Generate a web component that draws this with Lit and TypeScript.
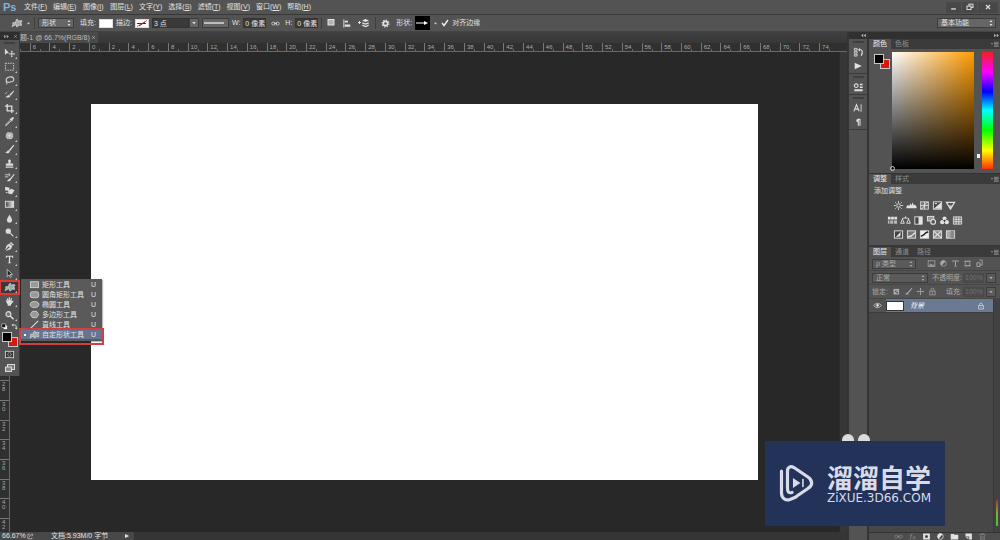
import { LitElement, html, svg, css, TemplateResult } from "lit";
import { customElement, property, state } from "lit/decorators.js";
import { classMap } from "lit/directives/class-map.js";

type Glyph = TemplateResult;

/* 12x12 glyphs; "currentColor" follows the button colour. */
const glyphs: Record<string, Glyph> = {
  move: svg`<path d="M1 1.5v7l2-1.8h2.6z" fill="currentColor"/><path d="M8.5 4.5v6M5.5 7.5h6" stroke="currentColor"/><path d="M7.4 5.3h2.2l-1.1-1.4zM7.4 9.7h2.2l-1.1 1.4zM10.6 6.4v2.2l1.2-1.1z" fill="currentColor"/>`,
  marquee: svg`<rect x="1.5" y="2.5" width="9" height="7.5" fill="none" stroke="currentColor" stroke-dasharray="1.6 1.1"/>`,
  lasso: svg`<ellipse cx="6.5" cy="5" rx="4.2" ry="2.8" fill="none" stroke="currentColor" stroke-width="1.1" transform="rotate(-12 6.5 5)"/><path d="M3 6.6c-1.4 .4-1.2 2 .2 1.7M3.2 8.3c.6 .8 0 1.7-1 2" fill="none" stroke="currentColor"/>`,
  quick: svg`<path d="M10.5 1.5L5.8 6.2l1.4 1.2 3.8-5z" fill="currentColor"/><path d="M5.5 6.6c-1.5 0-2 1.6-4 2 1.6 1.2 4.5 1 5.2-.8z" fill="currentColor"/><path d="M1.5 5.5c.5-1.6 2-2.3 3.3-2.3" fill="none" stroke="currentColor" stroke-dasharray="1 1"/>`,
  crop: svg`<path d="M3.5 1v7.5H11M1 3.5h7.5V11" fill="none" stroke="currentColor" stroke-width="1.4"/>`,
  dropper: svg`<path d="M7.2 3L9 1.3c1-.7 2.2 .5 1.6 1.5L9 4.6l.5 .7-.8 .7-2.7-2.7 .7-.7z" fill="currentColor"/><path d="M6.7 4.7L2.5 9l-.8 1.5L3.2 9.7l4.2-4.2" fill="none" stroke="currentColor"/>`,
  patch: svg`<rect x="2.5" y="3" width="7" height="6.5" rx="2" fill="#b5b5b5" stroke="currentColor" stroke-dasharray="1.5 .8"/><path d="M4 6.2h4M6 4.5v3.5" stroke="currentColor"/>`,
  brush: svg`<path d="M11 1L5.5 6.5l1.2 1.2z" fill="currentColor"/><path d="M10.8 1.2L6 7" stroke="currentColor" stroke-width="1.2"/><path d="M5.2 6.9c-1.6 0-1.6 2-3.9 2.5 1.8 1.3 5 .8 5-1.5z" fill="currentColor"/>`,
  stamp: svg`<path d="M4.5 2.7a1.6 1.6 0 0 1 3 0c.2 1.3-.7 1.8-.5 3.3h3v2.5H2V6h3c.2-1.5-.7-2-.5-3.3zM1.8 9.4h8.4v1.2H1.8z" fill="currentColor"/>`,
  history: svg`<path d="M11 2L6.5 7c-1.5 .2-1.5 1.8-3.5 2.5 2 1.2 4.5 .3 4.7-1.7L11.5 3z" fill="currentColor"/><path d="M1 3h5M1 5.3h3.5M5 1.5L6.8 3 5 4.5" fill="none" stroke="currentColor" stroke-width=".9"/>`,
  eraser: svg`<path d="M1.2 2l4.8 1v3.5L1.2 5.7z" fill="currentColor"/><path d="M4.6 6.6l3.4-2.4 3.5 1.6-2.8 4.2-4.1-.8z" fill="currentColor"/><path d="M2 8l2 .4" stroke="currentColor"/>`,
  gradient: svg`<defs><linearGradient id="gr"><stop stop-color="#444"/><stop offset="1" stop-color="#eee"/></linearGradient></defs><rect x="1.5" y="2.5" width="9" height="6.5" fill="url(#gr)" stroke="currentColor"/>`,
  drop: svg`<path d="M6 1.5c.5 2 2.8 3.7 2.8 6A2.8 2.8 0 0 1 6 10.3a2.8 2.8 0 0 1-2.8-2.8c0-2.3 2.3-4 2.8-6z" fill="currentColor"/>`,
  dodge: svg`<circle cx="4.7" cy="4.5" r="2.9" fill="currentColor"/><path d="M6.8 6.6l3.4 3.6" stroke="currentColor" stroke-width="1.2"/>`,
  pen: svg`<path d="M7.6 1l3.2 3-1.2 1.2-3.2-3zM6 2.8l3 3-1.5 3.2L1.8 11l3-3a1 1 0 1 0-.8-.8l-3 3 2-5.7z" fill="currentColor"/>`,
  type: svg`<path d="M2 2h8v2.3h-.8L8.7 3H6.7v6.2l1.2 .3v.6H4.1v-.6l1.2-.3V3h-2l-.5 1.3H2z" fill="currentColor"/>`,
  pick: svg`<path d="M3.5 1.5v8l2-2 1.3 2.7 1.2-.6-1.3-2.5h2.6z" fill="#222" stroke="currentColor" stroke-width=".8"/>`,
  shape: svg`<path d="M1 9.5c1-1.5 1.3-2.5 .6-3.5 1.2-.7 2.4-.5 3 .3-.2-1.4 .4-2.9 1.5-4.2 .9 .8 1.2 1.7 1.1 2.5 .9-.9 2.3-1.2 3.8-.6-.3 1-.8 1.5-1.5 1.7 .9 .5 1.2 1.4 1 2.6-1 .3-1.7 0-2.3-.6-.3 1-1.2 2-2.5 2.1-.3-.6-.2-1.2 .1-2-1.3 0-2.6 .5-4.8 1.7z" fill="#a5a5a5" stroke="currentColor" stroke-width=".8"/>`,
  hand: svg`<path d="M2 5.5c-.4-.8 .5-1.3 1-.6l.8 1L3 3.2c-.2-.9 .9-1.2 1.2-.3L5 5.2l.1-3.3c0-.9 1.2-.9 1.3 0l.2 3.2 .9-2.4c.3-.8 1.4-.5 1.2 .4l-.6 3 1.2-.8c.8-.4 1.3 .4 .7 1L7.500 9.5v1H4v-1.3z" fill="currentColor"/>`,
  zoom: svg`<circle cx="4.8" cy="4.5" r="2.7" fill="#777" stroke="currentColor" stroke-width="1.2"/><path d="M6.9 6.6l3.5 3.6" stroke="currentColor" stroke-width="1.6"/>`,
  mask: svg`<rect x="1.5" y="2.5" width="9" height="7" fill="#333" stroke="currentColor" stroke-width=".9"/><circle cx="6" cy="6" r="1.9" fill="none" stroke="currentColor" stroke-dasharray="1 .7"/>`,
  screen: svg`<rect x="3.5" y="2.5" width="7" height="5" fill="#777" stroke="currentColor"/><rect x="1.5" y="5" width="6" height="4.5" fill="#888" stroke="currentColor"/>`,
  rect: svg`<rect x="1.5" y="3" width="9" height="6.5" fill="#999" stroke="currentColor" stroke-width=".8"/>`,
  round: svg`<rect x="1.5" y="3" width="9" height="6.5" rx="2" fill="#999" stroke="currentColor" stroke-width=".8"/>`,
  oval: svg`<ellipse cx="6" cy="6" rx="4.7" ry="3.3" fill="#999" stroke="currentColor" stroke-width=".8"/>`,
  poly: svg`<path d="M3.8 2.5h4.4L10.6 6 8.2 9.5H3.8L1.4 6z" fill="#999" stroke="currentColor" stroke-width=".8"/>`,
  line: svg`<path d="M2 10l8-8" stroke="currentColor" stroke-width="1.1"/>`,
  square: svg`<rect x="3" y="2.5" width="6" height="5.5" fill="#b4b4b4" stroke="currentColor"/>`,
  align: svg`<path d="M2 1.5v9" stroke="currentColor"/><path d="M3 3h3.5v2H3zM3 7h6v2.5H3z" fill="currentColor"/>`,
  stack: svg`<path d="M0 5.5h3M1.5 4v3" stroke="currentColor"/><path d="M4 3.5L7.5 2 11 3.5 7.5 5z" fill="currentColor"/><path d="M4.3 5.8l3.2 1.3 3.2-1.3M4.3 8.2l3.2 1.3 3.2-1.3" fill="none" stroke="currentColor" stroke-width="1.3"/>`,
  gear: svg`<circle cx="6" cy="6" r="2.9" fill="none" stroke="currentColor" stroke-width="2.2"/><circle cx="6" cy="6" r="4.6" fill="none" stroke="currentColor" stroke-width="1.4" stroke-dasharray="1.8 1.8"/>`,
  link: svg`<rect x="1" y="4.2" width="4.6" height="3.8" rx="1.9" fill="none" stroke="currentColor"/><rect x="6.4" y="4.2" width="4.6" height="3.8" rx="1.9" fill="none" stroke="currentColor"/><path d="M4 6h4" stroke="currentColor"/>`,
  play: svg`<path d="M2 2v8l8.5-4z" fill="currentColor"/>`,
  steps: svg`<path d="M1.5 1.5h3v2h-3zM1.5 4.7h3v2h-3zM1.5 7.9h3v2h-3z" fill="none" stroke="currentColor" stroke-width=".9"/><path d="M6 3h2.5c2 0 2 3.5 .5 6.5" fill="none" stroke="currentColor" stroke-width="1.3"/><path d="M5.5 3l2-2v4z" fill="currentColor"/>`,
  props: svg`<circle cx="3.5" cy="4" r="2" fill="none" stroke="currentColor" stroke-width="1.2"/><path d="M7.5 2h3v1.5h-3zM7.5 5h3v1.5h-3zM1.5 8h9v2.2h-9z" fill="currentColor"/>`,
  char: svg`<path d="M1 10L4.2 2l3.2 8M2.2 7.3h4" fill="none" stroke="currentColor" stroke-width="1.3"/><path d="M9.7 1.5v9" stroke="currentColor"/>`,
  para: svg`<path d="M9 2v8.5H7.8V3.2H7v7.3H5.8V6.5a2.3 2.3 0 0 1 0-4.5z" fill="currentColor"/>`,
  sun: svg`<circle cx="6" cy="6" r="1.9" fill="none" stroke="currentColor"/><path d="M6 1v2M6 9v2M1 6h2M9 6h2M2.5 2.5l1.3 1.3M8.2 8.2l1.3 1.3M9.5 2.5L8.2 3.8M3.8 8.2L2.5 9.5" stroke="currentColor"/>`,
  levels: svg`<path d="M.5 9V7l1.5-1.5L3.500 6.500 5 3.500l1 2.500 1.200-3.500L8.500 6l1-1L11.500 7v2z" fill="currentColor"/>`,
  curves: svg`<rect x="1.5" y="2" width="9" height="8" fill="#777" stroke="currentColor" stroke-width=".8"/><path d="M2 9.5c4 0 3.5-7 8-7M1.5 6h9M6 2v8" fill="none" stroke="#eee" stroke-width=".8"/>`,
  expo: svg`<rect x="1.5" y="2" width="9" height="8" fill="#444" stroke="currentColor"/><path d="M2 9.5l8-7v7z" fill="currentColor"/><path d="M3 4h2.5" stroke="#fff"/>`,
  vib: svg`<path d="M1.5 2.5h9L6 10z" fill="none" stroke="currentColor" stroke-width="1.3"/><path d="M4.5 6h3L6 9z" fill="currentColor"/>`,
  hue: svg`<path d="M1 2h3v3H1zM4.5 2h3v3h-3zM8 2h3v3H8z" fill="currentColor"/><path d="M1 6h10v3.5H1z" fill="#bbb"/><path d="M3 6v3.5M7 6v3.5" stroke="#555"/>`,
  balance: svg`<path d="M6 1.500v2M2 4.3c2-1.5 6-1.5 8 0M2.7 4.500l-2 4.500h4zM9.300 4.500l-2 4.500h4z" fill="none" stroke="currentColor"/>`,
  bw: svg`<rect x="2" y="2" width="8" height="8" fill="#444" stroke="currentColor"/><path d="M6 2h4v8H6z" fill="currentColor"/>`,
  photo: svg`<rect x="1.5" y="1.5" width="7" height="5" fill="#999" stroke="currentColor"/><circle cx="7.8" cy="7.5" r="2.6" fill="#555" stroke="currentColor" stroke-width="1.2"/>`,
  mixer: svg`<circle cx="6" cy="3.7" r="2.2" fill="currentColor"/><circle cx="3.5" cy="7.8" r="2.3" fill="currentColor"/><circle cx="8.5" cy="7.8" r="2.3" fill="currentColor"/><circle cx="6" cy="6.3" r="1" fill="#333"/>`,
  lut: svg`<path d="M1.5 2h9v8h-9zM1.5 4.7h9M1.5 7.3h9M4.5 2v8M7.5 2v8" fill="#777" stroke="currentColor" stroke-width=".9"/>`,
  invert: svg`<rect x="1.5" y="2" width="9" height="8" fill="#444" stroke="currentColor"/><path d="M3 9l5.5-6L8 8z" fill="currentColor"/>`,
  poster: svg`<rect x="1.5" y="2" width="9" height="8" fill="#777" stroke="currentColor"/><path d="M2 8l4-1.5L10 3v2L6 8.5l-4 1z" fill="currentColor"/>`,
  thresh: svg`<rect x="1.5" y="2" width="9" height="8" fill="#eee" stroke="currentColor"/><path d="M2 8l3-1.5L7 4.5 10 3" fill="none" stroke="#222" stroke-width="1.6"/>`,
  select: svg`<rect x="1.5" y="2" width="9" height="8" fill="#888" stroke="currentColor"/><path d="M2 2.5L6 6l4-3.5M2 9.5L6 6l4 3.5" fill="none" stroke="currentColor" stroke-width="1.2"/>`,
  gmap: svg`<rect x="1.5" y="2" width="9" height="8" fill="#aaa" stroke="currentColor"/><path d="M6 2h4v8H6z" fill="#888"/>`,
  image: svg`<rect x="1.5" y="2.5" width="9" height="7.5" fill="none" stroke="currentColor"/><path d="M2.5 9l2.5-3 2 2 1-1 2 2z" fill="currentColor"/>`,
  half: svg`<circle cx="6" cy="6" r="3.7" fill="none" stroke="currentColor"/><path d="M6 2a4 4 0 0 0 0 8z" fill="currentColor" transform="rotate(40 6 6)"/>`,
  frame: svg`<path d="M3 3h6v6H3zM1.5 3h9M1.5 9h9" fill="none" stroke="currentColor"/>`,
  smart: svg`<path d="M2.5 5h4v5h-4zM6 1.5h3.5V8H6.5" fill="none" stroke="currentColor" stroke-width="1.2"/>`,
  pixels: svg`<rect x="2" y="2.5" width="7.5" height="7.5" fill="currentColor"/><path d="M4 4.5h2v2H4zM6 6.5h2v2H6z" fill="#555"/>`,
  cross: svg`<path d="M6 1.5v9M1.5 6h9" stroke="currentColor"/><path d="M4.8 3L6 1l1.2 2zM4.8 9L6 11l1.2-2zM3 4.8L1 6l2 1.2zM9 4.8L11 6 9 7.2z" fill="currentColor"/>`,
  lock: svg`<rect x="2.5" y="5.5" width="7" height="5" fill="none" stroke="currentColor"/><path d="M4 5.5V3.7a2 2 0 0 1 4 0v1.8M6 7v2" fill="none" stroke="currentColor"/>`,
  eye: svg`<path d="M1 6c2.5-3.7 7.5-3.7 10 0-2.5 3.7-7.5 3.7-10 0z" fill="none" stroke="currentColor"/><circle cx="6" cy="5.8" r="1.8" fill="currentColor"/>`,
  fx: svg`<path d="M6 2c-1.5-.5-1.5 1-2 4s-.8 4-2 4M2.5 5h3M6.5 5.5l3.5 4M10 5.5l-3.7 4" fill="none" stroke="currentColor"/>`,
  addmask: svg`<rect x="1.5" y="2" width="9" height="8" fill="currentColor"/><circle cx="6" cy="6" r="2" fill="#444"/>`,
  folder: svg`<path d="M1 2.5h4l1 1.2h5V10H1z" fill="currentColor"/>`,
  page: svg`<path d="M2 2h8.5v8H7V6H2z" fill="currentColor"/><path d="M2 6.5h4V10z" fill="#bbb"/>`,
  trash: svg`<path d="M2 3.5h8M4.5 3V2h3v1M3 4l.5 6.5h5L9 4M5 5.5v3.5M7 5.5v3.5" fill="none" stroke="currentColor"/>`,
  swap: svg`<path d="M3 3.5h4c1.5 0 2 .7 2 2V9" fill="none" stroke="currentColor" stroke-width="1.3"/><path d="M4 1v5L1 3.5zM6.5 8h5L9 11z" fill="currentColor"/>`,
  mini: svg`<rect x="4.5" y="4.5" width="6" height="6" fill="#fff"/><rect x="1.5" y="1.5" width="6" height="6" fill="#111" stroke="currentColor"/>`,
  share: svg`<path d="M5 2H1.5v8h7V8M4 7c0-3 2-4 5-4M8 1l2.5 2L8 5" fill="none" stroke="currentColor"/>`,
  updown: svg`<path d="M4 4.500L6 1.500l2 3zM4 7.500L6 10.500l2-3z" fill="currentColor"/>`,
  down: svg`<path d="M2.500 4h7L6 8.500z" fill="currentColor"/>`,
  menu: svg`<path d="M0 5h3L1.5 7z" fill="currentColor"/><path d="M4.5 3.5h7M4.5 5.5h7M4.5 7.5h7M4.5 9.5h7" stroke="currentColor" stroke-width=".9"/>`,
  expand: svg`<path d="M5.5 3v6L2 6zM10 3v6L6.5 6z" fill="currentColor"/>`,
  forward: svg`<path d="M2 3v6l3.5-3zM6.5 3v6L10 6z" fill="currentColor"/>`,
  close: svg`<path d="M3 3l6 6M9 3L3 9" stroke="currentColor" stroke-width="1.7"/>`,
  minimise: svg`<path d="M2 8.5h8" stroke="currentColor" stroke-width="2.2"/>`,
  restore: svg`<rect x="4.5" y="1.7" width="6" height="5" fill="none" stroke="currentColor" stroke-width="1.5"/><rect x="1.5" y="4.7" width="6" height="5" fill="#444" stroke="currentColor" stroke-width="1.5"/>`,
};

@customElement("ps-icon")
export class PsIcon extends LitElement {
  @property() name = "move";
  @property({ type: Number }) size = 12;

  static styles = css`
    :host { display: inline-flex; flex: none; }
    svg { display: block; }
  `;

  render() {
    return html`<svg width=${this.size} height=${this.size} viewBox="0 0 12 12" aria-hidden="true">${glyphs[this.name]}</svg>`;
  }
}

const icon = (name: string, size = 10) => html`<ps-icon name=${name} .size=${size}></ps-icon>`;

const menus: [string, string][] = [
  ["文件", "F"], ["编辑", "E"], ["图像", "I"], ["图层", "L"], ["文字", "Y"],
  ["选择", "S"], ["滤镜", "T"], ["视图", "V"], ["窗口", "W"], ["帮助", "H"],
];

const tools: [string, string][] = [
  ["move", "移动"], ["marquee", "选框"], ["lasso", "套索"], ["quick", "快速选择"], ["crop", "裁剪"],
  ["dropper", "吸管"], ["patch", "修补"], ["brush", "画笔"], ["stamp", "仿制图章"], ["history", "历史记录画笔"],
  ["eraser", "橡皮擦"], ["gradient", "渐变"], ["drop", "模糊"], ["dodge", "减淡"], ["pen", "钢笔"],
  ["type", "文字"], ["pick", "路径选择"], ["shape", "自定形状"], ["hand", "抓手"], ["zoom", "缩放"],
];

const shapes: [string, string][] = [
  ["rect", "矩形工具"], ["round", "圆角矩形工具"], ["oval", "椭圆工具"],
  ["poly", "多边形工具"], ["line", "直线工具"], ["shape", "自定形状工具"],
];

const adjustments: string[][] = [
  ["sun", "levels", "curves", "expo", "vib"],
  ["hue", "balance", "bw", "photo", "mixer", "lut"],
  ["invert", "poster", "thresh", "select", "gmap"],
];

const hTicks = Array.from({ length: 42 }, (_, i) => Math.abs(i * 2 - 8));
const vTicks = Array.from({ length: 24 }, (_, i) => Math.abs(i * 2 - 4));

@customElement("app-root")
export class AppRoot extends LitElement {
  @state() private tool = "shape";
  @state() private shapeTool = "shape";

  static styles = css`
    :host {
      display: block;
      font: 7px/10px "Liberation Sans", "Noto Sans CJK SC", sans-serif;
      color: #e2e2e2;
    }
    * { box-sizing: border-box; }
    button, input, select { font: inherit; color: inherit; margin: 0; padding: 0; border: 0; background: none; border-radius: 0; appearance: none; }
    button { display: inline-flex; align-items: center; justify-content: center; }
    .app { position: relative; height: 100vh; display: flex; flex-direction: column; background: #333; overflow: hidden; white-space: nowrap; }

    .menubar { display: flex; align-items: center; height: 15px; background: #535353; border-bottom: 1px solid #383838; }
    .brand { width: 24px; padding-left: 3px; font-size: 11px; font-weight: 700; color: #7fb2dc; }
    .menus { display: flex; gap: 6px; flex: 1; }
    .menus button { min-width: 22px; }
    .window { display: flex; gap: 1px; padding-right: 2px; }
    .window button { width: 15px; height: 11px; background: #484848; }
    .window .wide { width: 20px; }

    .options { display: flex; align-items: center; height: 17px; padding: 0 4px 0 11px; gap: 3px; background: #535353; border-bottom: 1px solid #444; }
    .group { display: flex; align-items: center; gap: 3px; }
    .wide-gap { gap: 5px; }
    .sep { width: 1px; height: 12px; background: #3e3e3e; }
    .picker { display: inline-flex; align-items: center; position: relative; height: 10px; border: 1px solid #3c3c3c; background: #666; }
    .picker select { flex: 1; height: 8px; padding: 0 10px 0 3px; line-height: 8px; min-width: 0; }
    .picker ps-icon { position: absolute; right: 0; pointer-events: none; }
    .w36 { width: 36px; }
    .w60 { width: 59px; }
    .swatch { width: 14px; height: 9px; background: #fff; border: 1px solid #ddd; color: #222; }
    .field { height: 10px; padding: 0 0 0 1px; background: #3a3a3a; border: 1px solid #343434; line-height: 8px; }
    .f22 { width: 23px; }
    .f36 { width: 37px; }
    .drop { width: 10px; height: 10px; background: #666; border: 1px solid #3c3c3c; }
    .joined { display: flex; }
    .stroke { width: 27px; height: 10px; border: 1px solid #3c3c3c; background: #666; }
    .preview { width: 15px; height: 14px; background: #000; }
    .check { display: inline-grid; align-items: center; }
    .check input, .check svg { grid-area: 1 / 1; width: 8px; height: 8px; }
    .check svg { pointer-events: none; }
    .fill { flex: 1; }

    .work { flex: 1; min-height: 0; display: grid; grid-template-columns: minmax(0, 1fr) 20px 131px; gap: 0 1px; }
    .doc { position: relative; min-height: 0; display: grid; grid-template-rows: 11px 9px minmax(0, 1fr) 8px; background: #333; }
    .doctabs { background: linear-gradient(#404040, #373737); padding-left: 20px; display: flex; }
    .doctab { background: #4a4a4a; padding-right: 2px; width: 78px; color: #bebebe; display: flex; align-items: center; justify-content: space-between; overflow: hidden; }
    .hruler { display: flex; padding: 0 8px 0 10px; background: #303030; border-bottom: 1px solid #686868; color: #a8a8a8; font-size: 6px; line-height: 8px; }
    .hruler span { flex: 1; min-width: 0; padding-left: 2px; border-left: 1px solid #777; background: linear-gradient(90deg, transparent 9px, #666 9px, #666 10px, transparent 10px) 0 6px / 100% 2px no-repeat; }
    .stage { display: grid; grid-template-columns: 10px minmax(0, 1fr) 8px; min-height: 0; background: #282828; }
    .vruler { display: flex; flex-direction: column; overflow: hidden; padding-top: 13px; background: #303030; border-right: 1px solid #686868; color: #a8a8a8; font-size: 6px; line-height: 5px; }
    .vruler span { flex: 0 0 4.22%; display: flex; flex-direction: column; padding: 1px 0 0 2px; border-top: 1px solid #777; }
    .vruler b { font-weight: 400; }
    .paper { display: grid; place-items: center; }
    .sheet { width: 80.5%; aspect-ratio: 667 / 375; background: #fff; }
    .gutter { background: #373737; border-left: 1px solid #2c2c2c; }
    .status { display: flex; align-items: center; background: #353535; line-height: 8px; }
    .status div { display: flex; align-items: center; width: 134px; padding: 0 4px 0 2px; background: #484848; }
    .status .zoomv { width: 25px; }
    .status .size { flex: 1; padding-left: 17px; }

    .toolbar { position: absolute; left: 0; top: 0; z-index: 2; width: 20px; background: #535353; border-right: 1px solid #3a3a3a; display: flex; flex-direction: column; }
    .barhead { display: flex; justify-content: space-between; align-items: center; height: 8px; padding: 0 1px 0 3px; background: #2e2e2e; color: #aaa; }
    .grip { height: 6px; display: grid; place-items: center; }
    .grip::before { content: ""; width: 11px; height: 2px; background: #3f3f3f; }
    .tools { display: grid; grid-template-rows: repeat(20, minmax(0, 1fr)); height: 276px; }
    .tools button, .modes button { position: relative; color: #dcdcdc; }
    .tools button::after { content: ""; position: absolute; right: 2px; bottom: 1px; border: 1px solid; border-color: transparent #ccc #ccc transparent; }
    .tools .on { background: #3a3a3a; outline: 2px solid #d93a36; outline-offset: -1px; z-index: 1; }
    .pair { display: flex; justify-content: space-between; padding: 0 1px; height: 8px; align-items: center; }
    .chips { position: relative; height: 18px; }
    .fore, .back { position: absolute; width: 10px; height: 10px; border: 1px solid #c8c8c8; }
    .fore { left: 2px; top: 2px; background: #000; z-index: 1; }
    .back { left: 8px; top: 7px; background: #d31a10; }
    .modes { display: grid; gap: 2px; padding: 0 0 2px; }
    .modes button { height: 12px; }

    .flyout { position: absolute; left: 21px; top: 247px; z-index: 3; width: 81px; padding-bottom: 2px; background: #5a5a5a; box-shadow: 1px 1px 1px #3335; }
    .flyout button { display: grid; grid-template-columns: 8px 13px 1fr 11px; width: 100%; height: 10px; text-align: left; }
    .flyout .on { position: relative; background: #66758f; }
    .flyout .on::after { content: ""; position: absolute; inset: -1px -2px -6px -2px; border: 2px solid #cf4040; pointer-events: none; }
    .flyout .on span:first-child::before { content: ""; display: block; width: 2px; height: 2px; background: #fff; margin-left: 3px; }

    .dock { background: #535353; display: flex; flex-direction: column; border: solid #363636; border-width: 0 1px; }
    .strip { height: 7px; display: flex; justify-content: flex-end; align-items: center; background: #303030; color: #bbb; }
    .dockgroup { display: flex; flex-direction: column; align-items: center; border-bottom: 1px solid #3a3a3a; }
    .dockgroup button { width: 18px; height: 14px; }

    .panels { display: flex; flex-direction: column; min-height: 0; background: #535353; }
    .tabs { display: flex; height: 10px; background: #3b3b3b; color: #8e8e8e; align-items: center; border-bottom: 1px solid #3b3b3b; }
    .tabs button { height: 10px; padding: 0 4px; }
    .tabs .on { background: #535353; color: #f0f0f0; }
    .tabs .more { margin-left: auto; padding: 0 1px; color: #b5b5b5; }
    .color { display: grid; grid-template-columns: 18px 1fr 11px; padding: 3px 7px 4px 3px; column-gap: 8px; height: 125px; border-bottom: 1px solid #333; }
    .well { position: relative; height: 18px; }
    .spectrum { position: relative; margin-left: -6px; background: linear-gradient(transparent, #000), linear-gradient(90deg, #fff, #ff9c00); }
    .ring { position: absolute; left: -2px; bottom: -2px; width: 5px; height: 5px; border: 1px solid #ccc; border-radius: 50%; }
    .hue { position: relative; background: linear-gradient(#f02020, #f0f 17%, #00f 34%, #0ff 50%, #0f0 67%, #ff0 84%, #ff3000); }
    .knob { position: absolute; left: -5px; bottom: 11px; width: 3px; height: 4px; background: #eee; }
    .adjust { padding: 2px 5px 5px; height: 63px; border-bottom: 2px solid #383838; display: flex; flex-direction: column; justify-content: space-between; }
    .adjrow { display: flex; justify-content: center; gap: 2px; padding-right: 20px; }
    .adjrow button { width: 11px; height: 10px; }
    .row { display: flex; align-items: center; height: 14px; padding: 0 4px 0 3px; gap: 2px; color: #aaa; border-bottom: 1px solid #464646; }
    .row .picker, .row .drop { background: #5a5a5a; }
    .row .group { gap: 1px; }
    .row .field { width: 21px; background: #4c4c4c; border-color: #484848; color: #707070; }
    .ghost { justify-content: space-between; flex: 1; display: flex; padding: 0 12px 0 9px; }
    .locks { display: flex; gap: 3px; padding-left: 2px; }
    .w44 { width: 44px; }
    .w56 { width: 56px; }
    .layers { flex: 1; min-height: 0; display: grid; grid-template-columns: 1fr 7px; background: #474747; }
    .track { background: #424242; border-left: 1px solid #383838; display: flex; flex-direction: column; justify-content: flex-end; align-items: center; padding-bottom: 6px; }
    .track i { width: 2px; height: 26px; background: linear-gradient(#a33, #8a3 50%, #3c3); }
    .layer { display: grid; grid-template-columns: 17px 18px 1fr 16px; align-items: center; height: 14px; background: linear-gradient(90deg, #535353 17px, #697a92 17px); border-bottom: 1px solid #3c3c3c; }
    .thumb { width: 18px; height: 10px; background: #fff; border: 1px solid #333; }
    .layer em { padding-left: 6px; color: #fff; }
    .foot { display: flex; align-items: center; justify-content: flex-end; height: 8px; gap: 5px; padding-right: 13px; background: #4e4e4e; border-top: 1px solid #333; }
    .foot .dim { color: #838383; }

    .mark { position: absolute; right: 55px; bottom: 14px; z-index: 5; width: 180px; height: 85px; display: flex; align-items: center; gap: 12px; padding: 0 14px; background: #233259; color: #d9dce8; }
    .mark::before, .mark::after { content: ""; position: absolute; top: -7px; width: 12px; height: 7px; border-radius: 6px 6px 0 0; background: #dcdcdc; }
    .mark::before { left: 77px; }
    .mark::after { left: 93px; }
    .mark strong { display: block; font: 700 26px/28px "Noto Sans CJK SC", sans-serif; }
    .mark span { display: block; font: 12px/14px "DejaVu Sans", sans-serif; }
  `;

  private optionsBar() {
    return html`
      <div class="options">
        <div class="group"><button aria-label="自定形状">${icon("shape", 12)}</button>${icon("down", 5)}</div>
        <span class="sep"></span>
        <label class="picker w36"><select aria-label="工具模式"><option>形状</option></select>${icon("updown", 8)}</label>
        <span></span>
        <div class="group"><span>填充:</span><button class="swatch" aria-label="填充颜色"></button></div>
        <div class="group"><span>描边:</span><button class="swatch" aria-label="描边颜色">
          <svg width="12" height="7" viewBox="0 0 12 7"><path d="M1 3.5h9M3 6l6-4" stroke="#333"/><path d="M1 6.5l10-6" stroke="#c22" stroke-width=".8"/></svg></button></div>
        <div class="joined"><input class="field f36" aria-label="描边宽度" value="3 点"><button class="drop" aria-label="宽度列表">${icon("down", 6)}</button></div>
        <button class="stroke" aria-label="描边类型"><svg width="22" height="6"><path d="M0 3h20" stroke="#eee" stroke-width="1.3"/></svg></button>
        <div class="group wide-gap">
          <label class="group"><span>W:</span><input class="field f22" value="0 像素"></label>
          <button aria-label="链接">${icon("link", 9)}</button>
          <label class="group"><span>H:</span><input class="field f22" value="0 像素"></label>
        </div>
        <span class="sep"></span>
        <div class="group wide-gap">
          <button aria-label="路径操作">${icon("square", 12)}</button>
          <button aria-label="路径对齐">${icon("align", 11)}</button>
          <button aria-label="路径排列">${icon("stack", 12)}</button>
          <span class="sep"></span>
          <button aria-label="设置">${icon("gear", 9)}</button>
        </div>
        <span></span>
        <div class="group"><span>形状:</span><button class="preview" aria-label="形状"><svg width="13" height="8"><path d="M0 4h10" stroke="#fff"/><path d="M8 2v4l4-2z" fill="#fff"/></svg></button>${icon("down", 5)}</div>
        <label class="group"><span class="check"><input type="checkbox" checked><svg viewBox="0 0 8 8"><path d="M1 4l2 2.5L7 1" fill="none" stroke="#eee" stroke-width="1.4"/></svg></span>对齐边缘</label>
        <span class="fill"></span>
        <label class="picker w60"><select aria-label="工作区"><option>基本功能</option></select>${icon("updown", 8)}</label>
      </div>`;
  }

  private toolbar() {
    return html`
      <aside class="toolbar">
        <div class="barhead">${icon("forward", 7)}${icon("close", 5)}</div>
        <div class="grip"></div>
        <div class="tools">
          ${tools.map(([n, t]) => html`<button class=${classMap({ on: n === this.tool })} title=${t} @click=${() => (this.tool = n)}>${icon(n, n === "shape" ? 12 : 11)}</button>`)}
        </div>
        <div class="pair">${icon("mini", 7)}${icon("swap", 7)}</div>
        <div class="chips"><button class="fore" aria-label="前景色"></button><button class="back" aria-label="背景色"></button></div>
        <div class="modes">
          <button aria-label="快速蒙版">${icon("mask", 11)}</button>
          <button aria-label="屏幕模式">${icon("screen", 12)}</button>
        </div>
      </aside>
      <div class="flyout" role="menu">
        ${shapes.map(([n, t]) => html`
          <button role="menuitem" class=${classMap({ on: n === this.shapeTool })} @click=${() => (this.shapeTool = n)}>
            <span></span>${icon(n, 11)}<span>${t}</span><span>U</span>
          </button>`)}
      </div>`;
  }

  private panels() {
    return html`
      <aside class="panels">
        <div class="strip">${icon("forward", 7)}</div>
        <div class="tabs"><button class="on">颜色</button><button>色板</button><button class="more" aria-label="菜单">${icon("menu", 8)}</button></div>
        <div class="color">
          <div class="well"><button class="fore" aria-label="前景色"></button><button class="back" aria-label="背景色"></button></div>
          <div class="spectrum"><i class="ring"></i></div>
          <div class="hue"><i class="knob"></i></div>
        </div>
        <div class="tabs"><button class="on">调整</button><button>样式</button><button class="more" aria-label="菜单">${icon("menu", 8)}</button></div>
        <div class="adjust">
          <span>添加调整</span>
          ${adjustments.map((r) => html`<div class="adjrow">${r.map((n) => html`<button aria-label=${n}>${icon(n, 11)}</button>`)}</div>`)}
        </div>
        <div class="tabs"><button class="on">图层</button><button>通道</button><button>路径</button><button class="more" aria-label="菜单">${icon("menu", 8)}</button></div>
        <div class="row">
          <label class="picker w44"><select aria-label="筛选"><option>ρ 类型</option></select>${icon("updown", 8)}</label>
          <div class="ghost">${["image", "half", "type", "frame", "smart"].map((n) => icon(n, 9))}</div>
        </div>
        <div class="row">
          <label class="picker w56"><select aria-label="混合模式"><option>正常</option></select>${icon("updown", 8)}</label>
          <span class="fill"></span>
          <label class="group">不透明度:<input class="field" value="100%"></label><button class="drop" aria-label="不透明度">${icon("down", 6)}</button>
        </div>
        <div class="row">
          <span>锁定:</span><div class="locks">${["pixels", "brush", "cross", "lock"].map((n) => icon(n, 9))}</div>
          <span class="fill"></span>
          <label class="group">填充:<input class="field" value="100%"></label><button class="drop" aria-label="填充">${icon("down", 6)}</button>
        </div>
        <div class="layers">
          <div><div class="layer"><button aria-label="可见性">${icon("eye", 9)}</button><span class="thumb"></span><em>背景</em>${icon("lock", 8)}</div></div>
          <div class="track"><i></i></div>
        </div>
        <div class="foot">
          <ps-icon class="dim" name="link" .size=${9}></ps-icon><ps-icon class="dim" name="fx" .size=${9}></ps-icon>
          ${["addmask", "half", "folder", "page"].map((n) => icon(n, 9))}
          <ps-icon class="dim" name="trash" .size=${9}></ps-icon>
        </div>
      </aside>`;
  }

  render() {
    return html`
      <div class="app">
        <header class="menubar">
          <span class="brand">Ps</span>
          <nav class="menus">${menus.map(([t, k]) => html`<button>${t}(<u>${k}</u>)</button>`)}</nav>
          <div class="window"><button aria-label="最小化">${icon("minimise", 7)}</button><button aria-label="还原">${icon("restore", 8)}</button><button class="wide" aria-label="关闭">${icon("close", 8)}</button></div>
        </header>
        ${this.optionsBar()}
        <div class="work">
          <main class="doc">
            <div class="doctabs"><div class="doctab"><span>题-1 @ 66.7%(RGB/8)</span>${icon("close", 5)}</div></div>
            <div class="hruler">${hTicks.map((n) => html`<span>${n}</span>`)}</div>
            <div class="stage">
              <div class="vruler">${vTicks.map((n) => html`<span>${[...String(n)].map((d) => html`<b>${d}</b>`)}</span>`)}</div>
              <div class="paper"><div class="sheet"></div></div>
              <div class="gutter"></div>
            </div>
            <div class="status"><div><span class="zoomv">66.67%</span>${icon("share", 7)}<span class="size">文档:5.93M/0 字节</span>${icon("play", 6)}</div></div>
            ${this.toolbar()}
          </main>
          <aside class="dock">
            <div class="strip">${icon("expand", 7)}</div>
            <div class="dockgroup"><span class="grip"></span><button aria-label="历史记录">${icon("steps", 11)}</button><button aria-label="动作">${icon("play", 10)}</button></div>
            <div class="dockgroup"><span class="grip"></span><button aria-label="属性">${icon("props", 11)}</button></div>
            <div class="dockgroup"><span class="grip"></span><button aria-label="字符">${icon("char", 10)}</button><button aria-label="段落">${icon("para", 10)}</button></div>
          </aside>
          ${this.panels()}
        </div>
        <section class="mark">
          <svg width="36" height="37" viewBox="0 0 36 37" fill="none" stroke="currentColor" stroke-width="3.2" stroke-linecap="round">
            <path d="M2.5 6v22c0 5 4 8 8.5 6.5l6-2.5"/>
            <path d="M13 27.5c-3.5 1-4.5-1-4.5-4.5V6c0-4 3-5.5 6.5-3.5l14 9.5c5 3.5 5 8.5 0 11.5l-11 7.5"/>
            <path d="M14 13v10l7.5-5z" fill="currentColor" stroke="none"/><path d="M24 14.5v7" stroke-width="1.6"/>
          </svg>
          <div><strong>溜溜自学</strong><span>ZiXUE.3D66.COM</span></div>
        </section>
      </div>`;
  }
}
